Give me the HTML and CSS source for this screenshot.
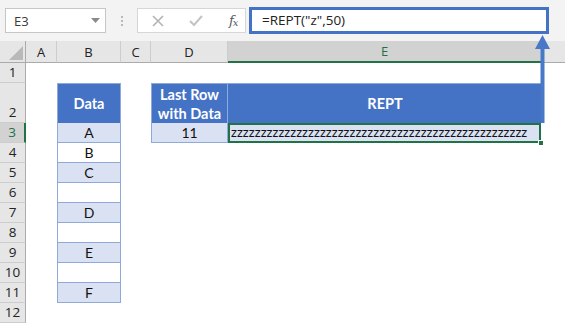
FILE: index.html
```html
<!DOCTYPE html>
<html>
<head>
<meta charset="utf-8">
<link rel="stylesheet" href="styles.css">
</head>
<body>
<div class="app">
  <div class="fbar">
    <div class="namebox"><span>E3</span><svg class="caret" width="9" height="5" viewBox="0 0 9 5"><path d="M0 0H9L4.5 5Z" fill="#8a8a8a"/></svg></div>
    <div class="grip"><i></i><i></i><i></i></div>
    <div class="fxbox">
      <svg class="ico" width="12" height="12" viewBox="0 0 12 12"><path d="M1 1L11 11M11 1L1 11" stroke="#b4b4b4" stroke-width="1.6" fill="none"/></svg>
      <svg class="ico" width="14" height="12" viewBox="0 0 14 12"><path d="M1 6L5 10L13 1" stroke="#c4c4c4" stroke-width="2" fill="none"/></svg>
      <span class="fx">f<sub>x</sub></span>
    </div>
    <div class="formula">=REPT("z",50)</div>
  </div>
  <div class="sheet">
    <div class="corner"><svg width="14" height="14" viewBox="0 0 14 14"><path d="M14 0V14H0Z" fill="#b9b9b9"/></svg></div>
    <div class="ch">A</div><div class="ch">B</div><div class="ch">C</div><div class="ch">D</div><div class="ch sel">E</div><div class="ch end"></div>

    <div class="rh">1</div><div></div><div></div><div></div><div></div><div></div><div></div>

    <div class="rh">2</div><div></div><div class="hd tb">Data</div><div></div><div class="hd tb two">Last Row<br>with Data</div><div class="hd tb rept">REPT</div><div></div>

    <div class="rh sel">3</div><div></div><div class="td alt">A</div><div></div><div class="td alt">11</div><div class="td alt zz">zzzzzzzzzzzzzzzzzzzzzzzzzzzzzzzzzzzzzzzzzzzzzzzzzz<span class="handle"></span></div><div></div>

    <div class="rh">4</div><div></div><div class="td">B</div><div></div><div></div><div></div><div></div>
    <div class="rh">5</div><div></div><div class="td alt">C</div><div></div><div></div><div></div><div></div>
    <div class="rh">6</div><div></div><div class="td"></div><div></div><div></div><div></div><div></div>
    <div class="rh">7</div><div></div><div class="td alt">D</div><div></div><div></div><div></div><div></div>
    <div class="rh">8</div><div></div><div class="td"></div><div></div><div></div><div></div><div></div>
    <div class="rh">9</div><div></div><div class="td alt">E</div><div></div><div></div><div></div><div></div>
    <div class="rh">10</div><div></div><div class="td"></div><div></div><div></div><div></div><div></div>
    <div class="rh">11</div><div></div><div class="td alt">F</div><div></div><div></div><div></div><div></div>
    <div class="rh">12</div><div></div><div></div><div></div><div></div><div></div><div></div>
  </div>
  <svg class="arrow" width="17" height="90" viewBox="0 0 17 90"><path d="M8.5 0L16 14H10.5V88H6.5V14H1Z" fill="#4a78c8"/></svg>
</div>
</body>
</html>
```
FILE: styles.css
```css
* { box-sizing: border-box; }
html, body { margin: 0; padding: 0; background: #fff; }
.app {
  position: relative;
  width: 565px;
  height: 324px;
  overflow: hidden;
  font-family: "Open Sans", "Noto Sans", sans-serif;
}
.fbar {
  height: 41px;
  background: #f3f3f3;
  display: flex;
  align-items: center;
}
.namebox {
  margin-left: 5px;
  width: 101px;
  height: 25px;
  border: 1px solid #c6c6c6;
  background: #fff;
  display: flex;
  align-items: center;
  justify-content: space-between;
  padding: 0 5px 0 8px;
  font-size: 13px;
  color: #3a3a3a;
}
.caret { margin-top: -1px; }
.grip {
  width: 31px;
  display: flex;
  flex-direction: column;
  align-items: center;
  gap: 2px;
}
.grip i {
  display: block;
  width: 2px;
  height: 2px;
  background: #b8b8b8;
}
.fxbox {
  width: 109px;
  height: 25px;
  border: 1px solid #d6d6d6;
  background: #fff;
  display: flex;
  align-items: center;
  padding-left: 14px;
}
.fxbox .ico:nth-child(2) { margin-left: 25px; }
.fx {
  margin-left: 26px;
  font-family: "DejaVu Serif", serif;
  font-style: italic;
  font-size: 13px;
  color: #5a5a5a;
  letter-spacing: -1px;
}
.fx sub { font-size: 10px; vertical-align: -1px; }
.formula {
  margin-left: 3px;
  width: 300px;
  height: 27px;
  border: 3px solid #4472c4;
  background: #fff;
  padding-left: 10px;
  font-size: 13.5px;
  line-height: 21px;
  color: #222;
}
.sheet {
  display: grid;
  grid-template-columns: 26px 31px 64px 30px 77px 314px 1fr;
  grid-template-rows: 22px 20px 40px repeat(10, 20px);
}
.corner {
  background: #e6e6e6;
  border-right: 1px solid #ababab;
  border-bottom: 1px solid #ababab;
  display: flex;
  align-items: flex-end;
  justify-content: flex-end;
  padding: 0 2px 2px 0;
}
.ch {
  background: #e6e6e6;
  border-right: 1px solid #cdcdcd;
  border-bottom: 1px solid #ababab;
  display: flex;
  align-items: center;
  justify-content: center;
  font-size: 13px;
  color: #222;
}
.ch.sel {
  background: #d2d2d2;
  color: #217346;
  border-bottom: 2px solid #217346;
  border-right: 1px solid #c0c0c0;
}
.ch.end { border-right: none; }
.rh {
  background: #e6e6e6;
  border-right: 1px solid #ababab;
  border-bottom: 1px solid #cdcdcd;
  display: flex;
  align-items: flex-end;
  justify-content: center;
  font-size: 13.5px;
  line-height: 19px;
  color: #222;
}
.rh.sel {
  background: #d2d2d2;
  color: #217346;
  border-right: 2px solid #217346;
}
.hd {
  background: #4472c4;
  color: #fff;
  font-family: Lato, "Open Sans", sans-serif;
  font-weight: bold;
  font-size: 14.5px;
  display: flex;
  align-items: center;
  justify-content: center;
  text-align: center;
  line-height: 19px;
  border: 1px solid #8eaadb;
  border-bottom: none;
}
.hd.rept { border-left: none; border-right: none; }
.hd.two { border-right: 1px solid #8eaadb; }
.td {
  font-family: Lato, "Open Sans", sans-serif;
  font-size: 14px;
  color: #111;
  display: flex;
  align-items: flex-end;
  justify-content: center;
  line-height: 18px;
  border: 1px solid #8eaadb;
  border-top: none;
}
.td.alt { background: #d9e1f2; }
.td.zz {
  position: relative;
  justify-content: flex-start;
  border: 2px solid #217346;
  padding-left: 1px;
  line-height: 17px;
  font-size: 13px;
  letter-spacing: 0.05px;
  margin-right: 1px;
}
.handle {
  position: absolute;
  right: -5px;
  bottom: -5px;
  width: 6px;
  height: 6px;
  background: #217346;
  border: 1px solid #fff;
}
.arrow {
  position: absolute;
  left: 534px;
  top: 35px;
}
```
